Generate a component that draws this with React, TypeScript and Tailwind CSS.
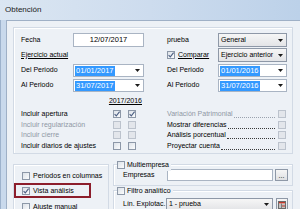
import React from 'react';

function Check({ on, off }: { on?: boolean; off?: boolean }) {
  return (
    <span
      className={`relative inline-flex h-[8px] w-[8px] shrink-0 items-center justify-center border ${
        off ? 'border-[#bcc3cd] bg-[#e3e6eb]' : 'border-[#8d98a8] bg-gradient-to-br from-[#dde2e8] to-[#fbfcfd]'
      }`}
    >
      {on && (
        <svg width="8" height="8" viewBox="0 0 8 8" className="absolute -left-px -top-px">
          <path d="M1.6 4.1 L3.3 5.9 L6.6 1.6" fill="none" stroke="#4c5f83" strokeWidth="1.1" />
        </svg>
      )}
    </span>
  );
}

function Arrow() {
  return (
    <svg width="5" height="3" viewBox="0 0 5 3" className="shrink-0">
      <path d="M0 0 H5 L2.5 3 Z" fill="#1b1b1b" />
    </svg>
  );
}

function DateField({ value, w }: { value: string; w: string }) {
  return (
    <div className={`flex h-[13px] ${w} items-center border border-[#a9b4c3] bg-white pl-[1px] pr-[3px] text-[7.5px]`}>
      <span className="bg-[#3399ff] px-[1px] leading-[10px] text-white">{value}</span>
      <span className="ml-auto">
        <Arrow />
      </span>
    </div>
  );
}

function Combo({ value, w, h = 'h-[14px]' }: { value: string; w: string; h?: string }) {
  return (
    <div
      className={`flex ${h} ${w} items-center border border-[#8e98a7] bg-gradient-to-b from-[#f6f6f6] to-[#e3e4e7] pl-[2px] pr-[3px]`}
    >
      <span className="whitespace-nowrap">{value}</span>
      <span className="ml-auto">
        <Arrow />
      </span>
    </div>
  );
}

const leftRows = [
  { label: 'Incluir apertura', a: true, b: true, dis: false },
  { label: 'Incluir regularización', a: false, b: false, dis: true },
  { label: 'Incluir cierre', a: false, b: false, dis: true },
  { label: 'Incluir diarios de ajustes', a: false, b: false, dis: false },
];

const rightRows = [
  { label: 'Variación Patrimonial', dis: true },
  { label: 'Mostrar diferencias', dis: false },
  { label: 'Análisis porcentual', dis: false },
  { label: 'Proyectar cuenta', dis: false },
];

export default function App() {
  return (
    <div className="flex h-[209px] w-[300px] flex-col overflow-hidden bg-[#c4d6eb] font-['Liberation_Sans',Arial,sans-serif] text-[7px] text-black">
      {/* title bar */}
      <div className="flex h-[20px] shrink-0 items-center bg-gradient-to-r from-[#dbe6f2] via-[#cddcee] to-[#bcd1e9] pl-[5px] text-[8px] text-[#1a1a1a]">
        Obtención
      </div>

      <div className="flex min-h-0 flex-1">
        <div className="w-[6px] shrink-0 border-l border-[#9db2cc] bg-[#c9d9ec]" />
        <div className="min-w-0 flex-1 border-l border-t border-[#9fb0c6] bg-[#edf1f6] pl-[6px] pt-[6px]">
          {/* main group */}
          <div className="h-[127px] w-[280px] border border-[#d2dae5] pl-[7px] pt-[5px] shadow-[inset_1px_1px_0_#fff]">
            <div className="flex h-[14px] items-center">
              <span className="w-[52px]">Fecha</span>
              <div className="flex h-[14px] w-[71px] items-center justify-center border border-[#a9b4c3] bg-white text-[7.5px]">
                12/07/2017
              </div>
              <span className="ml-[23px] w-[51px]">prueba</span>
              <Combo value="General" w="w-[69px]" />
            </div>
            <div className="mt-[1px] flex h-[14px] items-center">
              <span className="w-[146px]">
                <span className="underline">Ejercicio actual</span>
              </span>
              <span className="flex w-[51px] items-center gap-[3px]">
                <Check on />
                <span className="underline">Comparar</span>
              </span>
              <Combo value="Ejercicio anterior" w="w-[69px]" />
            </div>
            <div className="mt-[2px] flex h-[13px] items-center">
              <span className="w-[52px]">Del Periodo</span>
              <DateField value="01/01/2017" w="w-[71px]" />
              <span className="ml-[23px] w-[51px]">Del Periodo</span>
              <DateField value="01/01/2016" w="w-[69px]" />
            </div>
            <div className="mt-[2px] flex h-[13px] items-center">
              <span className="w-[52px]">Al Periodo</span>
              <DateField value="31/07/2017" w="w-[71px]" />
              <span className="ml-[23px] w-[51px]">Al Periodo</span>
              <DateField value="31/07/2016" w="w-[69px]" />
            </div>
            <div className="mt-[4px] flex h-[10px] w-[121px] items-center justify-end">
              <span className="underline">2017/2016</span>
            </div>
            <div className="mt-[3px] flex flex-col">
              {leftRows.map((r, i) => (
                <div key={r.label} className="flex h-[10.5px] items-center">
                  <span className={`w-[92px] whitespace-nowrap ${r.dis ? 'text-[#8f98a5]' : ''}`}>{r.label}</span>
                  <Check on={r.a} off={r.dis} />
                  <span className="w-[7px]" />
                  <Check on={r.b} off={r.dis} />
                  <span className="w-[31px]" />
                  <span
                    className={`flex w-[111px] items-end pr-[3px] ${rightRows[i].dis ? 'text-[#8f98a5]' : ''}`}
                  >
                    <span className="whitespace-nowrap">{rightRows[i].label}</span>
                    <span
                      className={`mb-[1.5px] ml-[1px] flex-1 border-b border-dotted ${
                        rightRows[i].dis ? 'border-[#9aa2ae]' : 'border-[#3a3a3a]'
                      }`}
                    />
                  </span>
                  <Check off />
                </div>
              ))}
            </div>
          </div>

          {/* lower groups */}
          <div className="mt-[10px] flex gap-[4px]">
            <div className="relative h-[60px] w-[96px] border border-[#d2dae5] pl-[8px] pt-[3px] shadow-[inset_1px_1px_0_#fff]">
              <div className="flex h-[15.5px] items-center gap-[3px]">
                <Check />
                <span className="whitespace-nowrap">Periodos en columnas</span>
              </div>
              <div className="flex h-[15.5px] items-center gap-[3px]">
                <Check on />
                <span className="whitespace-nowrap">Vista análisis</span>
              </div>
              <div className="flex h-[15.5px] items-center gap-[3px]">
                <Check />
                <span className="whitespace-nowrap">Ajuste manual</span>
              </div>
              <div className="absolute left-0 top-[18px] h-[15px] w-[77px] border-2 border-[#8c1d2b]" />
            </div>

            <div className="flex w-[180px] flex-col">
              <div className="relative h-[22px] border border-[#d2dae5] pl-[9px] pr-[3px] pt-[4px] shadow-[inset_1px_1px_0_#fff]">
                <div className="absolute -top-[5px] left-[3px] flex items-center gap-[2px] bg-[#edf1f6] pr-[2px]">
                  <Check />
                  <span>Multiempresa</span>
                </div>
                <div className="flex h-[12px] items-center">
                  <span className="w-[44px]">Empresas</span>
                  <div className="h-[12px] w-[106px] border border-[#a9b4c3] bg-white" />
                  <div className="ml-[2px] flex h-[12px] w-[13px] items-end justify-center border border-[#8e98a7] bg-gradient-to-b from-[#f6f6f6] to-[#dfe0e3] pb-[1px] leading-[6px]">
                    ...
                  </div>
                </div>
              </div>
              <div className="relative mt-[4px] h-[40px] border border-[#d2dae5] pl-[9px] pr-[3px] pt-[7px] shadow-[inset_1px_1px_0_#fff]">
                <div className="absolute -top-[5px] left-[3px] flex items-center gap-[2px] bg-[#edf1f6] pr-[2px]">
                  <Check />
                  <span>Filtro analítico</span>
                </div>
                <div className="flex h-[13px] items-center">
                  <span className="w-[43px] whitespace-nowrap">Lín. Explotac.</span>
                  <Combo value="1 - prueba" w="w-[107px]" h="h-[13px]" />
                  <div className="ml-[3px] flex h-[13px] w-[12px] items-center justify-center border border-[#8e98a7] bg-gradient-to-b from-[#f6f6f6] to-[#dfe0e3]">
                    <svg width="8" height="8" viewBox="0 0 8 8">
                      <rect x="0.5" y="0.5" width="7" height="7" fill="#fff" stroke="#6b6b6b" />
                      <rect x="1" y="1" width="6" height="1.5" fill="#c0392b" />
                      <path d="M1 4 H7 M1 6 H7 M3.5 2.5 V7.5" stroke="#6b6b6b" strokeWidth="0.8" />
                      <rect x="4" y="4.5" width="3" height="1" fill="#c0392b" />
                    </svg>
                  </div>
                </div>
              </div>
            </div>
          </div>
        </div>
      </div>
    </div>
  );
}
